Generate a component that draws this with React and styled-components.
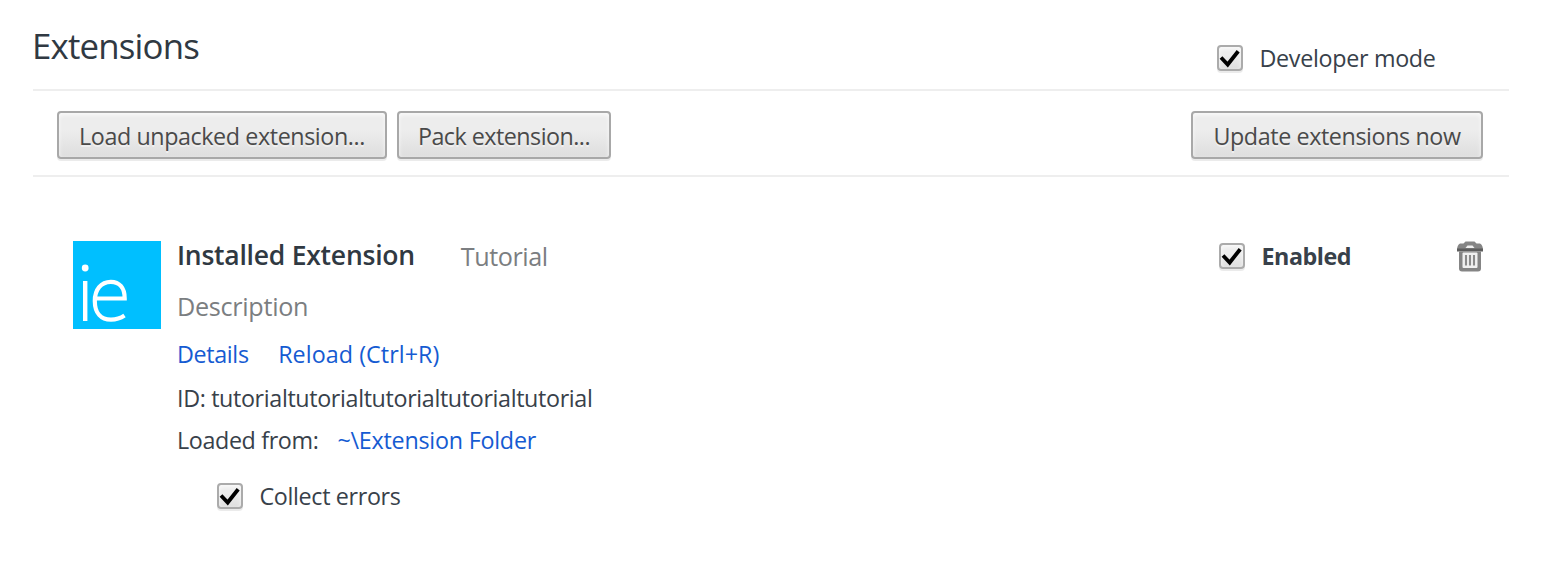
import React from 'react';
import styled, { createGlobalStyle, css } from 'styled-components';

const GlobalStyle = createGlobalStyle`
  * { box-sizing: border-box; }
  body {
    margin: 0;
    background: #fff;
    color: #38414a;
    font-family: 'Open Sans', 'Noto Sans', sans-serif;
    font-size: 23.3px;
    line-height: 32px;
  }
`;

const raised = css`
  background: linear-gradient(#ededed, #ededed 38%, #dedede);
  box-shadow: 0 2px 0 rgba(0, 0, 0, 0.08), inset 0 2px 4px rgba(255, 255, 255, 0.75);
`;

const Page = styled.main`
  width: 1476px;
  margin-left: 33px;
`;

const Header = styled.header`
  display: flex;
  justify-content: space-between;
  height: 91px;
  border-bottom: 2px solid #eee;
`;

const Title = styled.h1`
  margin: 0 0 0 -1px;
  padding-top: 21px;
  color: #303942;
  font-size: 34.8px;
  font-weight: 400;
  line-height: 50px;
  letter-spacing: -0.8px;
`;

const DeveloperMode = styled.div`
  width: 292px;
  padding-top: 42px;
`;

const Label = styled.span`
  white-space: nowrap;
  letter-spacing: ${(p) => p.$track}px;
  font-weight: ${(p) => (p.$bold ? 700 : 400)};
`;

const CheckRow = styled.label`
  display: flex;
  align-items: flex-start;
  gap: ${(p) => p.$gap}px;
`;

const Box = styled.span`
  flex: none;
  display: block;
  width: 26px;
  height: 26px;
  margin-top: 3px;
  border: 2px solid #ababab;
  border-radius: 4px;
  ${raised}

  svg { display: block; }
`;

const Toolbar = styled.div`
  display: flex;
  gap: 10px;
  height: 86px;
  padding: 20px 26px 0 24px;
  border-bottom: 2px solid #eee;
`;

const Button = styled.button`
  width: ${(p) => p.$width}px;
  height: 48px;
  margin: 0;
  margin-left: ${(p) => (p.$end ? 'auto' : '0')};
  padding: 2px 0 0;
  border: 2px solid #a8a8a8;
  border-radius: 4px;
  ${raised}
  color: #4a4a4a;
  font: inherit;
  letter-spacing: ${(p) => p.$track}px;
  white-space: nowrap;
  text-shadow: 0 2px 0 #f0f0f0;
`;

const Extension = styled.article`
  display: flex;
  padding: 63px 25px 0 40px;
`;

const IconSlot = styled.div`
  flex: none;
  width: ${(p) => p.$size}px;
  margin-top: 1px;

  svg { display: block; }
`;

const Details = styled.section`
  display: flex;
  flex-direction: column;
  flex: 1;
  padding-left: 16px;
`;

const Line = styled.div`
  display: flex;
  height: 32px;
  margin-top: ${(p) => p.$top ?? 0}px;
  padding-left: ${(p) => p.$indent ?? 0}px;
  gap: ${(p) => p.$gap ?? 0}px;
`;

const Name = styled.h2`
  margin: -1px 0 0;
  color: #303942;
  font-size: 26.5px;
  font-weight: 600;
  line-height: 32px;
  letter-spacing: -0.24px;
`;

const Muted = styled.span`
  color: #7b7e81;
  font-size: 25.2px;
  letter-spacing: ${(p) => p.$track}px;
`;

const Link = styled.a`
  color: #155bd2;
  white-space: nowrap;
  letter-spacing: ${(p) => p.$track}px;
`;

const Side = styled.aside`
  display: flex;
  justify-content: space-between;
  width: 265px;
`;

function Checkbox({ label, track, bold, gap = 16.5 }) {
  return (
    <CheckRow $gap={gap}>
      <Box>
        <svg width="22" height="22" viewBox="0 0 22 22">
          <path d="M2 10.5L8.7 17.5L19.2 4.2" fill="none" stroke="#000" strokeWidth="3.8" />
        </svg>
      </Box>
      <Label $track={track} $bold={bold}>{label}</Label>
    </CheckRow>
  );
}

function ExtensionIcon() {
  return (
    <svg width="88" height="88" viewBox="0 0 88 88">
      <rect width="88" height="88" fill="#00bfff" />
      <circle cx="12.2" cy="27" r="3.4" fill="#fff" />
      <path d="M12.2 40V80" stroke="#fff" strokeWidth="4.4" />
      <path
        d="M21.2 57.5H51.7C51.7 47 46.5 40.8 37.8 40.8C28 40.8 21.8 48.5 21.8 60C21.8 72 28 78.7 38 78.7C43.3 78.7 47.7 77.2 51.5 74.6"
        fill="none"
        stroke="#fff"
        strokeWidth="4.2"
      />
    </svg>
  );
}

function TrashIcon() {
  return (
    <svg width="28" height="32" viewBox="0 0 28 32">
      <path d="M9.5 0.5H18.5L20.5 2.5H24Q27 4 27 9.5H1Q1 4 4 2.5H7.5Z" fill="#858585" />
      <path d="M11.5 4.5H16.5L18.5 7H9.5Z" fill="#f0f0f0" />
      <path d="M1 7.5H27V10.5H1Z" fill="#5d5d5d" />
      <path d="M3 10.5H25V27.5Q25 30.5 22 30.5H6Q3 30.5 3 27.5Z" fill="#858585" />
      <rect x="6.5" y="11.5" width="15" height="15.5" rx="1" fill="#f1f1f1" />
      <path d="M10 14V24.5M14 14V24.5M18 14V24.5" stroke="#8b8b8b" strokeWidth="2.1" />
    </svg>
  );
}

export default function App() {
  return (
    <>
      <GlobalStyle />
      <Page>
        <Header>
          <Title>Extensions</Title>
          <DeveloperMode>
            <Checkbox label="Developer mode" track={-0.31} />
          </DeveloperMode>
        </Header>
        <Toolbar>
          <Button $width={330} $track={-0.41}>Load unpacked extension...</Button>
          <Button $width={214} $track={-0.52}>Pack extension...</Button>
          <Button $width={292} $track={-0.4} $end>Update extensions now</Button>
        </Toolbar>
        <Extension>
          <IconSlot $size={88}><ExtensionIcon /></IconSlot>
          <Details>
            <Line $gap={46}>
              <Name>Installed Extension</Name>
              <Muted $track={-0.45}>Tutorial</Muted>
            </Line>
            <Line $top={18}><Muted $track={-0.3}>Description</Muted></Line>
            <Line $top={16} $gap={29.5}>
              <Link $track={-0.35}>Details</Link>
              <Link $track={0.06}>Reload (Ctrl+R)</Link>
            </Line>
            <Line $top={12}><Label $track={-0.36}>ID: tutorialtutorialtutorialtutorialtutorial</Label></Line>
            <Line $top={10} $gap={19}>
              <Label $track={-0.37}>Loaded from:</Label>
              <Link $track={-0.23}>~\Extension Folder</Link>
            </Line>
            <Line $top={24} $indent={40}>
              <Checkbox label="Collect errors" track={-0.34} />
            </Line>
          </Details>
          <Side>
            <Checkbox label="Enabled" track={-0.45} bold />
            <IconSlot $size={28}><TrashIcon /></IconSlot>
          </Side>
        </Extension>
      </Page>
    </>
  );
}
